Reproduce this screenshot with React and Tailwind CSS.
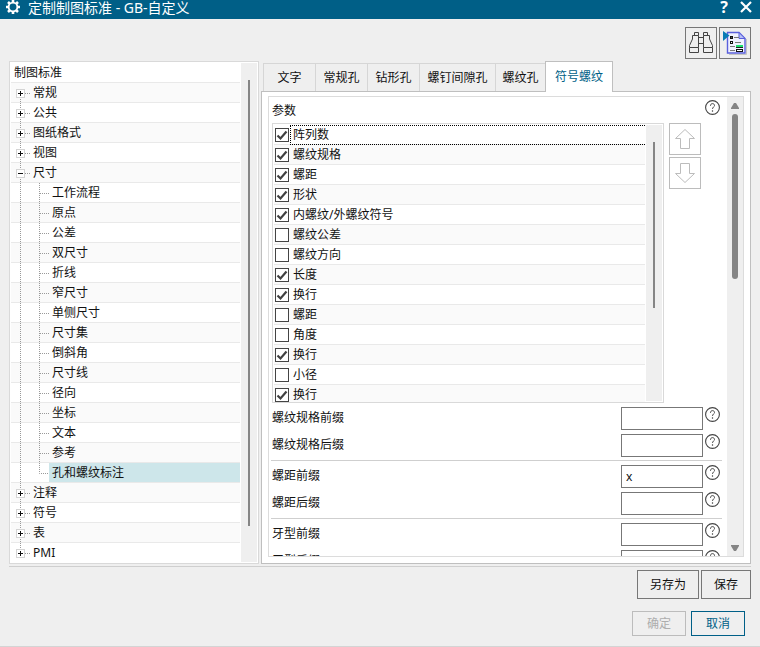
import React, { useState } from "react";

const branches = [
  { name: "常规" },
  { name: "公共" },
  { name: "图纸格式" },
  { name: "视图" },
  {
    name: "尺寸",
    children: ["工作流程", "原点", "公差", "双尺寸", "折线", "窄尺寸", "单侧尺寸", "尺寸集", "倒斜角", "尺寸线", "径向", "坐标", "文本", "参考", "孔和螺纹标注"],
  },
  { name: "注释" },
  { name: "符号" },
  { name: "表" },
  { name: "PMI" },
];

const treeRows = branches.flatMap((b) => [
  { name: b.name, open: Boolean(b.children), level: 1 },
  ...(b.children || []).map((c, i) => ({ name: c, level: 2, last: i === b.children.length - 1 })),
]);

const tabs = [
  { name: "文字", width: "w-[52px]" },
  { name: "常规孔", width: "w-[52px]" },
  { name: "钻形孔", width: "w-[52px]" },
  { name: "螺钉间隙孔", width: "w-[76px]" },
  { name: "螺纹孔", width: "w-[50px]" },
  { name: "符号螺纹", width: "w-[68px]" },
];

const parameters = [
  ["阵列数", true],
  ["螺纹规格", true],
  ["螺距", true],
  ["形状", true],
  ["内螺纹/外螺纹符号", true],
  ["螺纹公差", false],
  ["螺纹方向", false],
  ["长度", true],
  ["换行", true],
  ["螺距", false],
  ["角度", false],
  ["换行", true],
  ["小径", false],
  ["换行", true],
];

const fieldGroups = [
  [["螺纹规格前缀", ""], ["螺纹规格后缀", ""]],
  [["螺距前缀", "x"], ["螺距后缀", ""]],
  [["牙型前缀", ""], ["牙型后缀", ""]],
];

function GearIcon() {
  return (
    <svg viewBox="0 0 16 16" className="size-4 shrink-0" fill="none" stroke="white" aria-hidden="true">
      <circle cx="8" cy="7" r="4.4" strokeWidth="1.9" />
      <path
        strokeWidth="2.6"
        d="M8 0v2.200M8 11.800V14M1 7h2.200M12.800 7H15M3 2l1.700 1.700M11.300 10.300L13 12M13 2l-1.700 1.700M4.700 10.300L3 12"
      />
    </svg>
  );
}

function BinocularsIcon() {
  return (
    <svg viewBox="0 0 30 30" className="size-[30px]" fill="none" stroke="#444" strokeWidth="1" aria-hidden="true">
      <path d="M3.5 19.500h9v5h-9zM17.500 19.500h9v5h-9z" />
      <path d="M3.500 19.500V17.500L6.500 11V7.500h6v12M26.500 19.500V17.500L23.500 11V7.500h-6v12M8.500 7.500v-3h4v3M17.500 7.500v-3h4v3M12.500 9.500h5M12.500 15.500h5" />
    </svg>
  );
}

function ReportIcon() {
  return (
    <svg viewBox="0 0 30 30" className="size-[30px]" fill="none" aria-hidden="true">
      <path d="M9 26.500h17.500V11" stroke="#c4c4c4" />
      <path d="M7.500 4.500h11.500l6 6v14.500H7.500z" fill="#f0f2ff" stroke="#5a60dc" strokeWidth="1.400" />
      <path d="M19 4.500v6h6z" fill="#b9c0f7" stroke="#5a60dc" />
      <path d="M3 3l6.500 4.500L3 13z" fill="#0a7cb5" />
      <path d="M14 9.500h5M15 14.500h6M10 18.500h5M10 22.500h5" stroke="#777" />
      <rect x="10.500" y="8.500" width="2" height="2" fill="#555" stroke="#111" />
      <rect x="10.500" y="13.500" width="2" height="2" fill="#fff" stroke="#111" />
      <path d="M16 18h7" stroke="#1ce070" strokeWidth="2" />
      <path d="M16 19.500h7" stroke="#222" />
      <rect x="16.500" y="21.500" width="6" height="2" fill="#fff" stroke="#111" />
    </svg>
  );
}

function HelpIcon({ label }) {
  return (
    <button type="button" aria-label={label} className="size-[15px] shrink-0">
      <svg viewBox="0 0 15 15" className="size-[15px]" fill="none" stroke="#444">
        <circle cx="7.5" cy="7.5" r="6.900" strokeWidth="1.100" />
        <path d="M5.500 5.800c0-1.400.8-2.200 2-2.200s2 .8 2 1.900c0 1.500-2 1.600-2 3.400" />
        <path d="M7.500 10.300v1.400" strokeWidth="1.200" />
      </svg>
    </button>
  );
}

function ArrowIcon({ down }) {
  return (
    <svg viewBox="0 0 30 30" className={down ? "size-[30px] rotate-180" : "size-[30px]"} fill="none" stroke="#bcbcbc" aria-hidden="true">
      <path d="M15 5.500L24.500 14.500H19.500V24.500H10.500V14.500H5.500Z" />
    </svg>
  );
}

function TreeRow({ row, index, total, selected, onSelect }) {
  const shade = index % 2 === 0 ? "bg-[#fafafa]" : "bg-white";
  const afterLast = index === total - 1;
  return (
    <li className={`flex h-5 border-b ${afterLast ? "border-white" : "border-[#e9e9e9]"} ${shade}`}>
      <svg viewBox="0 0 38 20" className={row.level === 2 ? "h-5 w-[38px] shrink-0" : "h-5 w-[19px] shrink-0"} preserveAspectRatio="xMinYMin slice" fill="none" aria-hidden="true">
        <path d={index === 0 ? "M9.500 10V20" : afterLast ? "M9.500 0V10" : "M9.500 0V20"} stroke="#999" strokeDasharray="1 1" />
        {row.level === 1 ? (
          <>
            <path d="M14 10.500h5" stroke="#999" strokeDasharray="1 1" />
            <rect x="5.500" y="6.500" width="8" height="8" fill="white" stroke="#d4d4d4" />
            <path d={row.open ? "M7 10.500h5" : "M7 10.500h5M9.500 8v5"} stroke="#111" />
          </>
        ) : (
          <path d={row.last ? "M28.500 0V10.500H38" : "M28.500 0V20M29 10.500H38"} stroke="#999" strokeDasharray="1 1" />
        )}
      </svg>
      <button
        type="button"
        onClick={onSelect}
        className={`h-[19px] grow pl-[3px] text-left leading-[19px] ${selected ? "bg-[#cde6ea]" : ""}`}
      >
        {row.name}
      </button>
    </li>
  );
}

function ParameterRow({ name, initial, index }) {
  const [checked, setChecked] = useState(initial);
  return (
    <li className={`h-5 border-b border-[#e9e9e9] ${index % 2 ? "bg-[#fafafa]" : "bg-white"}`}>
      <label className="flex h-5 items-center">
        <span className="ml-px grid size-[14px] shrink-0">
          <input
            type="checkbox"
            checked={checked}
            onChange={() => setChecked(!checked)}
            className="col-start-1 row-start-1 size-[14px] appearance-none border border-[#444] bg-white"
          />
          {checked && (
            <svg viewBox="0 0 14 14" className="pointer-events-none col-start-1 row-start-1 size-[14px]" fill="none" stroke="#404040" strokeWidth="2.200" aria-hidden="true">
              <path d="M2.500 7.500L5.500 10.500L11.500 3.500" />
            </svg>
          )}
        </span>
        <span className={`ml-px flex h-5 grow items-center border-y border-l pl-[2px] ${index === 0 ? "border-dotted border-black" : "border-transparent"}`}>{name}</span>
      </label>
    </li>
  );
}

export default function App() {
  const [selected, setSelected] = useState("孔和螺纹标注");
  const [tab, setTab] = useState("符号螺纹");
  return (
    <div className="flex h-screen flex-col overflow-hidden border-b border-[#d4d4d4] bg-[#efefef] font-['Noto_Sans','Noto_Sans_CJK_SC',sans-serif] text-[12px] leading-[18px] text-[#111]">
      <header className="flex h-[19px] shrink-0 items-start bg-[#005f87] pr-2 pl-[5px] text-white">
        <GearIcon />
        <h1 className="ml-[7px] grow text-[14px] leading-[16px]">定制制图标准 - GB-自定义</h1>
        <button type="button" aria-label="帮助" className="mr-3 text-[16px] leading-[14px] font-bold">?</button>
        <button type="button" aria-label="关闭" className="pt-px">
          <svg viewBox="0 0 12 12" className="size-3" stroke="white" strokeWidth="2.200">
            <path d="M1 1l10 10M11 1L1 11" />
          </svg>
        </button>
      </header>

      <div className="flex shrink-0 justify-end gap-[2px] px-[9px] pt-2">
        <button type="button" aria-label="查找" className="size-8 border border-[#777]"><BinocularsIcon /></button>
        <button type="button" aria-label="报告" className="size-8 border border-[#777]"><ReportIcon /></button>
      </div>

      <main className="mx-[9px] mt-[2px] flex min-h-0 flex-1 gap-[2px] border-b border-[#cfcfcf] pb-[2px]">
        <nav aria-label="制图标准" className="flex w-[250px] shrink-0 overflow-hidden border border-[#d9d9d9] bg-white p-px">
          <div className="grow">
            <div className="h-5 border-b border-[#e9e9e9] pl-[3px] leading-[19px]">制图标准</div>
            <ul>
              {treeRows.map((row, i) => (
                <TreeRow key={row.name} row={row} index={i} total={treeRows.length} selected={row.name === selected} onSelect={() => setSelected(row.name)} />
              ))}
            </ul>
          </div>
          <div className="ml-px flex w-4 justify-center bg-[#efefef] pt-[17px]">
            <div className="h-[446px] w-[2px] bg-[#858585]" />
          </div>
        </nav>

        <section className="flex min-w-0 flex-1 flex-col">
          <div role="tablist" className="flex h-[30px] shrink-0 items-end pl-[2px]">
            {tabs.map((t) => (
              <button
                key={t.name}
                type="button"
                role="tab"
                aria-selected={t.name === tab}
                onClick={() => setTab(t.name)}
                className={`${t.width} shrink-0 border-t border-l whitespace-nowrap ${
                  t.name === tab ? "z-10 -mb-px h-[31px] border-r border-[#bfbfbf] bg-white text-[#005f87]" : "h-7 border-[#d6d6d6]"
                }`}
              >
                {t.name}
              </button>
            ))}
          </div>

          <div role="tabpanel" className="flex min-h-0 flex-1 border border-[#bfbfbf] bg-white px-[6px] pt-1 pb-[6px]">
            <div className="flex min-w-0 flex-1 overflow-hidden border border-[#dcdcdc]">
              <div className="min-w-0 flex-1 pr-[5px] pl-[2px]">
                <div className="flex h-[26px] items-start justify-between pt-[3px] pr-[2px] pl-px">
                  <h2 className="pt-px leading-[20px]">参数</h2>
                  <HelpIcon label="参数帮助" />
                </div>
                <div className="flex gap-[5px] pr-[21px] pl-px">
                  <div className="flex h-[280px] min-w-0 flex-1 overflow-hidden border border-[#d9d9d9] p-px">
                    <ul className="min-w-0 grow">
                      {parameters.map(([name, initial], i) => (
                        <ParameterRow key={i} name={name} initial={initial} index={i} />
                      ))}
                    </ul>
                    <div className="ml-px flex w-4 shrink-0 justify-center bg-[#efefef] pt-[17px]">
                      <div className="h-[166px] w-[2px] bg-[#858585]" />
                    </div>
                  </div>
                  <div className="flex flex-col gap-[2px]">
                    <button type="button" aria-label="上移" className="size-8 border border-[#bcbcbc]"><ArrowIcon /></button>
                    <button type="button" aria-label="下移" className="size-8 border border-[#bcbcbc]"><ArrowIcon down /></button>
                  </div>
                </div>
                {fieldGroups.map((group, g) => (
                  <div key={g} className={`flex flex-col gap-1 pt-1 pb-[3px] ${g < 2 ? "border-b border-[#cfcfcf]" : ""}`}>
                    {group.map(([name, value]) => (
                      <div key={name} className="flex h-[23px] items-start pr-[2px] pl-px">
                        <label htmlFor={name} className="grow leading-[22px]">{name}</label>
                        <input id={name} type="text" defaultValue={value} className="mr-[2px] h-[23px] w-[82px] border border-[#777] bg-white px-1 text-[12px]" />
                        <HelpIcon label={`${name}帮助`} />
                      </div>
                    ))}
                  </div>
                ))}
              </div>
              <div className="flex w-4 shrink-0 flex-col items-center bg-[#efefef] pt-[6px] pb-[5px]">
                <svg viewBox="0 0 8 6" className="h-[6px] w-2" fill="#858585" aria-hidden="true"><path d="M3 0h2l3 5v1H0V5z" /></svg>
                <div className="mt-[5px] h-[165px] w-[6px] rounded-full bg-[#858585]" />
                <svg viewBox="0 0 8 6" className="mt-auto h-[6px] w-2" fill="#858585" aria-hidden="true"><path d="M3 6h2l3-5V0H0v1z" /></svg>
              </div>
            </div>
          </div>
        </section>
      </main>

      <footer className="shrink-0 pb-[10px]">
        <div className="flex justify-end gap-[2px] px-[9px] pt-[3px]">
          <button type="button" className="h-[29px] w-[62px] border border-[#777]">另存为</button>
          <button type="button" className="h-[29px] w-[50px] border border-[#777]">保存</button>
        </div>
        <div className="flex justify-end gap-[5px] px-[15px] pt-3">
          <button type="button" disabled className="h-[25px] w-[54px] border border-[#bcbcbc] text-[#adadad]">确定</button>
          <button type="button" className="h-[25px] w-[54px] border border-[#005f87] text-[#005f87]">取消</button>
        </div>
      </footer>
    </div>
  );
}
